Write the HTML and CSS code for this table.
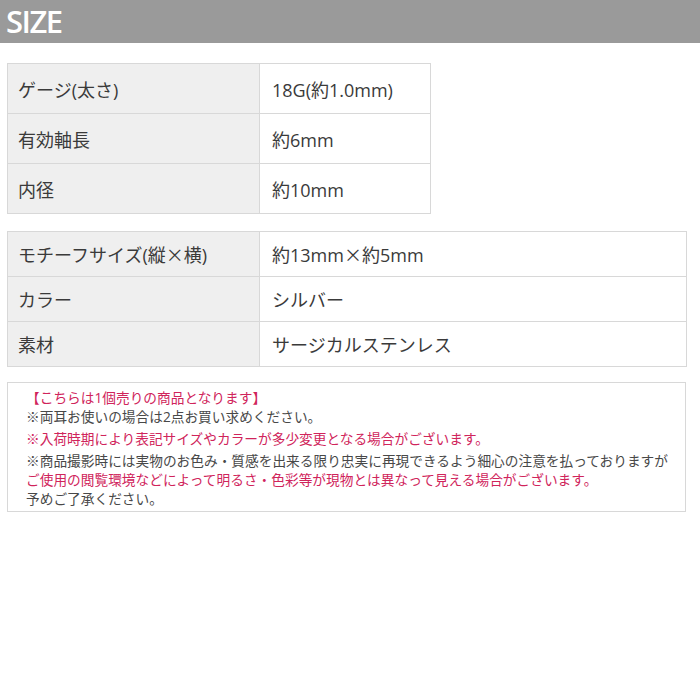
FILE: index.html
```html
<!DOCTYPE html>
<html lang="ja">
<head>
<meta charset="utf-8">
<link rel="stylesheet" href="styles.css">
</head>
<body>
<header class="title-bar"><h1 class="title">SIZE</h1></header>
<main class="content">
  <table class="spec spec-narrow">
    <tr><th>ゲージ(太さ)</th><td>18G(約1.0mm)</td></tr>
    <tr><th>有効軸長</th><td>約6mm</td></tr>
    <tr><th>内径</th><td>約10mm</td></tr>
  </table>
  <table class="spec spec-wide">
    <tr><th>モチーフサイズ(縦<span class="cjk">×</span>横)</th><td>約13mm<span class="cjk">×</span>約5mm</td></tr>
    <tr><th>カラー</th><td>シルバー</td></tr>
    <tr><th>素材</th><td>サージカルステンレス</td></tr>
  </table>
  <div class="notes">
    <p><span class="red">【こちらは1個売りの商品となります】</span><br>※両耳お使いの場合は2点お買い求めください。</p>
    <p class="red">※入荷時期により表記サイズやカラーが多少変更となる場合がございます。</p>
    <p>※商品撮影時には実物のお色み・質感を出来る限り忠実に再現できるよう細心の注意を払っておりますが<br><span class="red">ご使用の閲覧環境などによって明るさ・色彩等が現物とは異なって見える場合がございます。</span><br>予めご了承ください。</p>
  </div>
</main>
</body>
</html>
```
FILE: styles.css
```css
html, body {
  margin: 0;
  padding: 0;
  background: #fff;
}
body {
  font-family: "Open Sans", "Noto Sans CJK JP", sans-serif;
  color: #3a3a3a;
}
.title-bar {
  background: #9a9a9a;
  height: 43px;
  display: flex;
  align-items: center;
  padding-left: 6px;
}
.title {
  margin: 0;
  color: #fff;
  font-family: "Open Sans", sans-serif;
  font-weight: 600;
  font-size: 31px;
  letter-spacing: -1.5px;
  line-height: 1;
}
.content {
  padding: 20px 14px 0 7px;
}
.spec {
  border-collapse: collapse;
  font-size: 18px;
  margin-bottom: 17px;
}
.spec-wide { margin-bottom: 15px; }
.spec-narrow { width: 424px; }
.spec-wide { width: 680px; }
.spec th, .spec td {
  border: 1px solid #d8d8d8;
  text-align: left;
  font-weight: 400;
  padding: 0 0 0 10px;
  white-space: nowrap;
}
.spec th {
  background: #efefef;
  width: 241px;
}
.spec td {
  padding-left: 12px;
}
.cjk {
  font-family: "Noto Sans CJK JP", sans-serif;
}
.spec-narrow tr { height: 50px; }
.spec-wide tr { height: 45px; }
.notes {
  border: 1px solid #d8d8d8;
  padding: 5px 10px 3px 18px;
  font-size: 13.7px;
  line-height: 19px;
  color: #484848;
  height: 120px;
  box-sizing: content-box;
}
.notes p {
  margin: 0 0 3px;
  white-space: nowrap;
}
.notes p:last-child { margin-bottom: 0; }
.red { color: #d0245b; }
```
